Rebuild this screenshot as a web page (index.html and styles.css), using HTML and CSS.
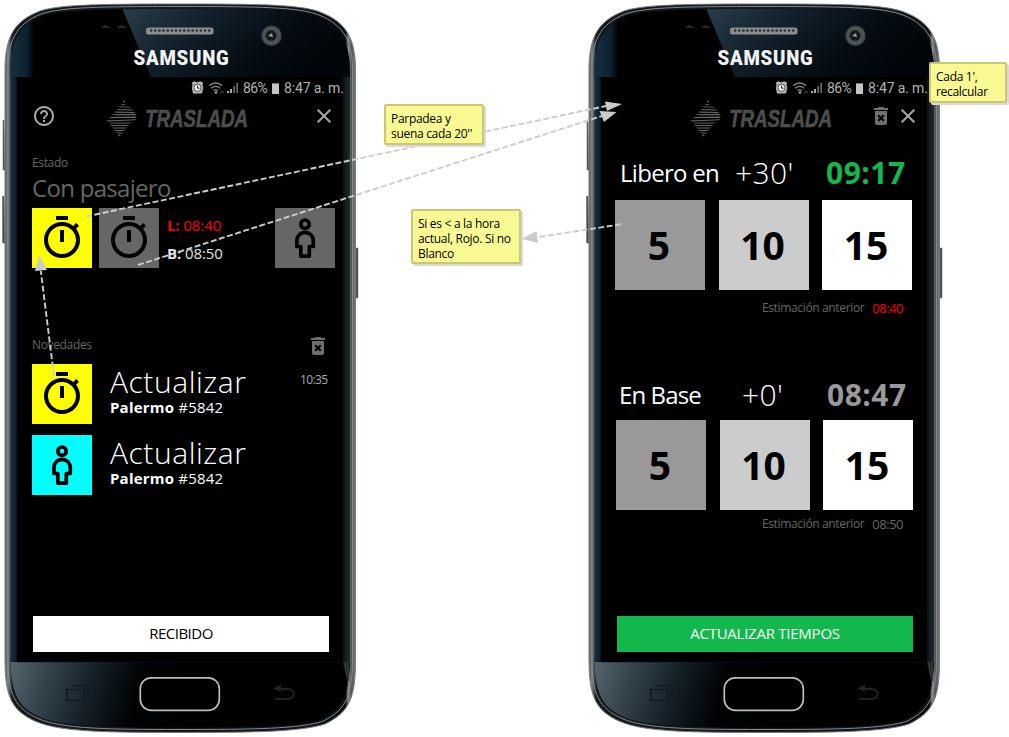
FILE: index.html
```html
<!DOCTYPE html>
<html lang="es">
<head>
<meta charset="utf-8">
<title>Traslada</title>
<link rel="stylesheet" href="styles.css">
</head>
<body>
<svg class="defs" width="0" height="0">
  <defs>
    <linearGradient id="side" x1="0" x2="1" y1="0" y2="0">
      <stop offset="0" stop-color="#55595b"/><stop offset=".008" stop-color="#7d8284"/><stop offset=".014" stop-color="#4d5355"/>
      <stop offset=".02" stop-color="#15191c"/><stop offset=".5" stop-color="#15191c"/>
      <stop offset=".972" stop-color="#0c1013"/><stop offset=".98" stop-color="#8b8f92"/><stop offset=".988" stop-color="#4c5154"/><stop offset="1" stop-color="#7a7d80"/>
    </linearGradient>
    <linearGradient id="face" x1="0" x2="1" y1="0" y2="0">
      <stop offset=".027" stop-color="#2a3942"/><stop offset=".034" stop-color="#122a38"/><stop offset=".044" stop-color="#0b1e2b"/><stop offset=".05" stop-color="#000"/>
      <stop offset=".93" stop-color="#000"/><stop offset=".95" stop-color="#141b1f"/><stop offset=".96" stop-color="#20282c"/>
    </linearGradient>
    <linearGradient id="glare" x1="0" x2="1" y1="0" y2=".35">
      <stop offset="0" stop-color="#2b3f4b"/><stop offset=".4" stop-color="#101f2a"/><stop offset=".75" stop-color="#050c12"/><stop offset="1" stop-color="#02060a"/>
    </linearGradient>
    <linearGradient id="edge" x1="0" x2="1" y1="0" y2="0">
      <stop offset="0" stop-color="#17303f"/><stop offset=".7" stop-color="#0b2230"/><stop offset="1" stop-color="#000"/>
    </linearGradient>
    <linearGradient id="chin" x1="0" x2="1" y1="0" y2=".06">
      <stop offset="0" stop-color="#55666e"/><stop offset=".12" stop-color="#34434b"/><stop offset=".25" stop-color="#15222a"/><stop offset=".4" stop-color="#010203"/><stop offset="1" stop-color="#000"/>
    </linearGradient>
    <radialGradient id="lens"><stop offset="0" stop-color="#9a9fa2"/><stop offset=".3" stop-color="#24282a"/><stop offset=".6" stop-color="#43474a"/><stop offset="1" stop-color="#565b5e"/></radialGradient>
    <pattern id="holes" x="149" y="28.500" width="4.150" height="4" patternUnits="userSpaceOnUse"><rect x="1" y="1" width="2.200" height="2.200" fill="#1b1f22"/></pattern>
    <clipPath id="inner"><path d="M10.500 72C10.500 42 18 27 42 16C62 9.500 105 9 180 9S298 9.500 318 17C341 26 350 43 350 72V655C350 692 343 708 322 719C302 727 250 727.500 180 727.500S62 727 40 717C17 707 10.500 692 10.500 655Z"/></clipPath>
  </defs>
  <symbol id="phone" viewBox="0 0 364 737">
    <path d="M4 120H3V170H5ZM4 196H2.500V243H5ZM356 248H358V298H356Z" fill="#444" stroke="#777" stroke-width=".6"/>
    <path d="M5 70C5 37 14 21 40 11C60 4.500 100 4 180 4S300 4.500 320 12C346 22 355.500 38 355.500 70V660C355.500 697 350 712 325 724C300 732 250 732.500 180 732.500S60 732 36 721.500C12 711 5 697 5 660Z" fill="url(#side)" stroke="#777b7d" stroke-width="1"/>
    <path d="M8 71C8 40 16 24 41 14C61 7 102 6.500 180 6.500S299 7 319 15C344 25 352.500 41 352.500 71V658C352.500 694 347 709 323.500 721C301 729 250 729.500 180 729.500S61 729 38 718.500C14.500 708 8 694 8 658Z" fill="none" stroke="#84898c" stroke-width="1"/>
    <g clip-path="url(#inner)">
      <rect width="364" height="737" fill="url(#face)"/>
      <rect x="10" y="10" width="24" height="67" fill="url(#edge)"/>
      <path d="M121 6L151 77H350V6Z" fill="url(#glare)"/>
      <rect x="10" y="662" width="341" height="70" fill="url(#chin)"/>
      <path d="M343 662L349 690V662Z" fill="#2b3235"/>
    </g>
    <path d="M17 661.800H343" stroke="#0a1d3c"/>
    <path d="M101 28Q105 22 110 28ZM117 28Q121 22 127 28Z" fill="#24282a"/>
    <rect x="146" y="27.500" width="67.500" height="7" rx="2.500" fill="#8c8f90"/>
    <rect x="149" y="28.500" width="62" height="4" fill="url(#holes)"/>
    <circle cx="271.500" cy="35.700" r="10.200" fill="#3f4447"/><circle cx="271.500" cy="35.700" r="8.500" fill="url(#lens)"/>
    <circle cx="271" cy="35.500" r="5.200" fill="#15191b"/><path d="M268 36L272 33L273 37Z" fill="#9da0a2"/>
    <text class="brand" x="133.500" y="65" textLength="96" lengthAdjust="spacingAndGlyphs">SAMSUNG</text>
    <rect x="140.300" y="677.800" width="79" height="32.500" rx="11" fill="#000" stroke="#bbb" stroke-width="1.700"/>
    <g fill="none" stroke="#101c23" stroke-width="1.700"><path d="M67 689.500H84V700.500H67ZM71 685.500H88V697"/></g>
    <path d="M276 689H287C296 689 296 699 287 699H275" fill="none" stroke="#1f2426" stroke-width="2"/><path d="M273 688.500L281 684.500V692Z" fill="#1f2426"/>
  </symbol>
  <symbol id="logo" viewBox="0 0 150 40">
    <g fill="#6a6a6a">
      <path d="M18 4.200L19 3.500L20 4.800L19 6ZM16 6.800L22 7.500L17 8ZM13.500 9.200L25 10V10.700L15 10.300ZM11.500 11.900L27.500 12.600V13.400L13 13ZM9.500 14.600L29.500 15V15.900L11 15.700ZM7 17.200L31.500 16.700L30.500 18.300L9 18.200ZM4 20L32 19.400L30 20.900L6 20.900ZM0.800 23.500L31.500 22.200L30 23.300L3 24.500ZM4 25.800L27 25.600L24 26.600L6 26.600ZM5.500 28.100L24.500 28.100L22 29L7 29ZM7 30.500L22.500 30.500L20 31.400L8.500 31.400ZM9.500 33L20.500 33L18.500 33.900L10.500 33.900ZM11.500 35.500H18L17 36.400H12.500ZM13 38L14.300 37.500L15.500 38.200L14.300 39.600Z"/>
    </g>
    <text class="wordmark" x="40" y="30" textLength="103" lengthAdjust="spacingAndGlyphs">TRASLADA</text>
  </symbol>
  <symbol id="status-icons" viewBox="0 0 48 14">
    <path d="M1 1.500L3.500 .3L6 1.500L9 .3L12 1.500L11.500 4L12.300 6.500L11 12.500H2L.8 6.500L1.500 4Z" fill="#b5b5b5"/><circle cx="6.500" cy="6.800" r="3.600" fill="#eee" stroke="#333" stroke-width=".8"/><path d="M6.500 4.800V7.200H8.500" fill="none" stroke="#222"/>
    <g fill="none" stroke="#888" stroke-width="1.400"><path d="M18 4.500Q25 -.5 31 4.500M20 7.200Q25 3.500 29 7.200M22.500 9.700Q25 8 27 9.700"/></g><circle cx="25" cy="11.500" r="1.200" fill="#aaa"/><path d="M29 11H33" stroke="#555"/>
    <path d="M36 10H38V12H36ZM39 8H41V12H39Z" fill="#aaa"/><path d="M42.300 5H44V12H42.300ZM45.300 2H47V12H45.300Z" fill="#666"/>
  </symbol>
  <symbol id="timer" viewBox="0 0 24 24"><path d="M15 1H9v2h6V1zm-4 13h2V8h-2v6zm8.030-6.610l1.420-1.420c-.43-.51-.9-.99-1.410-1.410l-1.420 1.420C16.070 4.740 14.120 4 12 4c-4.970 0-9 4.030-9 9s4.020 9 9 9 9-4.030 9-9c0-2.120-.74-4.070-1.970-5.610zM12 20c-3.870 0-7-3.130-7-7s3.130-7 7-7 7 3.130 7 7-3.130 7-7 7z"/></symbol>
  <symbol id="person" viewBox="0 0 60 60"><g fill="none" stroke="#000" stroke-width="3.700" stroke-linejoin="round"><circle cx="30" cy="16.200" r="4.200"/><path d="M25.800 48.200V38.500H21.900V32.500A8.150 8.150 0 0 1 38.300 32.500V38.500H34.300V48.200Z"/></g></symbol>
  <symbol id="trash" viewBox="0 0 24 24"><path d="M6 19c0 1.100.9 2 2 2h8c1.100 0 2-.9 2-2V7H6v12zm2.460-7.120l1.410-1.410L12 12.590l2.120-2.120 1.410 1.410L13.410 14l2.120 2.120-1.410 1.410L12 15.410l-2.120 2.120-1.410-1.410L10.590 14l-2.130-2.120zM15.500 4l-1-1h-5l-1 1H5v2h14V4z"/></symbol>
  <symbol id="close" viewBox="0 0 24 24"><path d="M19 6.410L17.590 5 12 10.590 6.410 5 5 6.410 10.590 12 5 17.590 6.410 19 12 13.410 17.590 19 19 17.590 13.410 12z"/></symbol>
  <symbol id="help" viewBox="0 0 24 24"><path d="M11 18h2v-2h-2v2zm1-16C6.480 2 2 6.480 2 12s4.480 10 10 10 10-4.480 10-10S17.520 2 12 2zm0 18c-4.410 0-8-3.590-8-8s3.590-8 8-8 8 3.590 8 8-3.590 8-8 8zm0-14c-2.210 0-4 1.790-4 4h2c0-1.100.9-2 2-2s2 .9 2 2c0 2-3 1.750-3 5h2c0-2.250 3-2.500 3-5 0-2.210-1.790-4-4-4z"/></symbol>
</svg>

<main class="board">
  <section class="phone">
    <svg class="frame"><use href="#phone"/></svg>
    <div class="screen">
      <div class="status"><svg class="status-icons"><use href="#status-icons"/></svg><span class="charge">86%</span><i class="battery"></i><span class="clock">8:47 a. m.</span></div>
      <header class="bar">
        <svg class="icon"><use href="#help"/></svg>
        <svg class="logo"><use href="#logo"/></svg>
        <svg class="icon"><use href="#close"/></svg>
      </header>
      <div class="label state-label">Estado</div>
      <h1 class="state">Con pasajero</h1>
      <div class="tiles">
        <div class="tile yellow"><svg class="timer"><use href="#timer"/></svg></div>
        <div class="tile gray"><svg class="timer"><use href="#timer"/></svg></div>
        <div class="times"><div class="late"><b>L:</b> 08:40</div><div><b>B:</b> 08:50</div></div>
        <div class="tile gray"><svg class="person"><use href="#person"/></svg></div>
      </div>
      <div class="news-head"><span class="label">Novedades</span><svg class="icon dim"><use href="#trash"/></svg></div>
      <div class="news">
        <article class="item">
          <div class="tile yellow"><svg class="timer"><use href="#timer"/></svg></div>
          <div class="item-text"><h2>Actualizar</h2><p><b>Palermo</b> #5842</p></div>
          <time>10:35</time>
        </article>
        <article class="item">
          <div class="tile cyan"><svg class="person"><use href="#person"/></svg></div>
          <div class="item-text"><h2>Actualizar</h2><p><b>Palermo</b> #5842</p></div>
        </article>
      </div>
      <button class="action">RECIBIDO</button>
    </div>
  </section>

  <section class="phone">
    <svg class="frame"><use href="#phone"/></svg>
    <div class="screen">
      <div class="status"><svg class="status-icons"><use href="#status-icons"/></svg><span class="charge">86%</span><i class="battery"></i><span class="clock">8:47 a. m.</span></div>
      <header class="bar">
        <span class="icon"></span>
        <svg class="logo"><use href="#logo"/></svg>
        <svg class="icon dim bar-trash"><use href="#trash"/></svg>
        <svg class="icon"><use href="#close"/></svg>
      </header>
      <section class="estimate">
        <div class="est-head"><span class="name">Libero en</span><span class="delta">+30'</span><strong class="eta green">09:17</strong></div>
        <div class="minutes"><button class="m5">5</button><button class="m10">10</button><button class="m15">15</button></div>
        <div class="previous">Estimación anterior <span class="prev-time late">08:40</span></div>
      </section>
      <section class="estimate base">
        <div class="est-head"><span class="name en-base">En Base</span><span class="delta zero">+0'</span><strong class="eta">08:47</strong></div>
        <div class="minutes"><button class="m5">5</button><button class="m10">10</button><button class="m15">15</button></div>
        <div class="previous">Estimación anterior <span class="prev-time">08:50</span></div>
      </section>
      <button class="action confirm">ACTUALIZAR TIEMPOS</button>
    </div>
  </section>

  <svg class="arrows" viewBox="0 0 1009 737">
    <g stroke="#ccc" stroke-width="1.900" stroke-dasharray="6 2.500">
      <path d="M86 216.500L606 106M138 265L602 116M54 376L40.800 271M621 224.300L537 237.300"/>
    </g>
    <path d="M622 104L605 101.500L607 111ZM616.500 112L599.500 111L604 122ZM39 255L35 271L47 270ZM521.500 239L536.500 231L538 243Z" fill="#ccc"/>
  </svg>
  <aside class="note blink">Parpadea y<br>suena cada 20''</aside>
  <aside class="note color">Si es &lt; a la hora<br>actual, Rojo. Si no<br>Blanco</aside>
  <aside class="note recalc">Cada 1',<br>recalcular</aside>
</main>
</body>
</html>
```
FILE: styles.css
```css
* { box-sizing: border-box; margin: 0; padding: 0; }
body { width: 1009px; height: 737px; overflow: hidden; background: #fff; font-family: "Open Sans", "Noto Sans", sans-serif; }
.defs { position: absolute; }
.board { position: relative; display: flex; gap: 220px; width: 1009px; height: 737px; }
.phone { position: relative; flex: none; width: 364px; height: 737px; padding: 77px 0 0 17px; }
.frame { position: absolute; inset: 0; width: 364px; height: 737px; }
.brand { font: 900 19.5px Roboto, sans-serif; letter-spacing: .8px; fill: #f2f2f2; }
.wordmark { font: italic bold 23px "Liberation Sans", sans-serif; fill: #4c4c4c; stroke: #5c5c5c; stroke-width: .4px; }
.screen { position: relative; display: flex; flex-direction: column; width: 326px; height: 585px; padding: 0 14px 10px 15px; background: #000; color: #fff; }

.status { display: flex; align-items: center; height: 22px; margin: 0 -14px 0 160px; font: 14px/22px Roboto, sans-serif; color: #b4b4b4; white-space: nowrap; }
.status-icons { flex: none; width: 48px; height: 14px; margin-left: -1px; }
.charge { flex: none; width: 24px; margin-left: 4px; letter-spacing: -.6px; }
.battery { flex: none; width: 7px; height: 11px; margin: 0 5px 0 5px; background: #c4c4c4; border-top: 1px solid #777; }
.clock { letter-spacing: -.15px; }
.bar { display: flex; align-items: center; height: 35px; padding-bottom: 2px; }
.icon { flex: none; width: 24px; height: 24px; fill: #a8a8a8; }
.dim { fill: #6f6f6f; }
.logo { width: 150px; height: 40px; margin: 2px 57px 0 49px; flex: none; }
.bar .bar-trash { margin-left: -27px; margin-right: 3px; }

.label { font-size: 12px; line-height: 16px; color: #666; letter-spacing: -.35px; }
.state-label { margin-top: 21px; }
.state { margin-top: 1px; font-size: 24px; line-height: 31px; font-weight: 400; color: #666; letter-spacing: -.7px; }
.tiles { display: flex; height: 60px; margin-top: 5px; }
.tile { flex: none; display: grid; place-items: center; width: 60px; height: 60px; }
.tiles .tile + .tile { margin-left: 7px; }
.timer { width: 48px; height: 48px; }
.person { width: 60px; height: 60px; }
.yellow { background: #ff0; }
.cyan { background: #0ff; }
.gray { background: #666; }
.times { flex: none; width: 116px; padding: 3px 0 0 8px; font-size: 15px; line-height: 28px; letter-spacing: -.1px; color: #e4e4e4; }
.late { color: #f00; }
.news-head { display: flex; align-items: center; justify-content: space-between; height: 24px; margin: 66px -1px 0 0; }
.news-head .label { margin-top: -2px; }
.news { display: grid; gap: 11px; margin-top: 6px; }
.item { display: flex; height: 60px; }
.item-text { flex: none; width: 208px; padding-left: 18px; }
h2 { padding-top: 1px; font-size: 30px; line-height: 33px; font-weight: 350; letter-spacing: .55px; }
p { font-size: 15px; line-height: 19px; letter-spacing: .2px; }
time { padding-top: 8px; font-size: 12px; line-height: 16px; letter-spacing: -.6px; color: #aaa; }
button { border: 0; font-family: inherit; color: #000; }
.action { width: 296px; height: 36px; margin: auto 0 0 1px; padding-bottom: 2px; background: #fff; font-size: 15px; letter-spacing: -.5px; }
.confirm { background: #12b84c; color: #fff; letter-spacing: -.25px; }

.estimate { margin: 22px 0 0 -1px; }
.base { margin: 62px 0 0 0; }
.est-head { display: grid; grid-template-columns: 121px 90px 1fr; height: 33px; line-height: 33px; white-space: nowrap; }
.name { padding-left: 5px; font-size: 24px; letter-spacing: -.7px; }
.en-base { padding-left: 3px; letter-spacing: -.9px; }
.delta { margin-left: -1px; font-size: 30px; font-weight: 350; letter-spacing: .4px; }
.zero { padding-left: 6px; }
.eta { font-size: 30px; letter-spacing: .5px; color: #999; }
.green { color: #12b84c; }
.minutes { display: grid; grid-template-columns: 90px 90px 90px; column-gap: 13.500px; margin-top: 11px; }
.base .minutes { margin-top: 9px; }
.minutes button { height: 90px; padding: 0 2px 1px 0; font-size: 39px; font-weight: 700; }
.m5 { background: #999; }
.m10 { background: #ccc; }
.m15 { background: #fff; }
.previous { display: flex; gap: 8px; justify-content: flex-end; margin: 10px 10px 0 0; font-size: 12px; line-height: 16px; color: #666; letter-spacing: -.35px; }
.base .previous { margin-top: 6px; }
.prev-time { font-size: 13px; letter-spacing: -.5px; }

.arrows { position: absolute; inset: 0; width: 1009px; height: 737px; }
.note { position: absolute; padding: 5px 0 0 5px; border: 2px solid #c8c874; border-radius: 2px; background: #f9f994; box-shadow: 2px 2px 0 #ddd8d8; font-size: 12px; line-height: 15px; letter-spacing: -.3px; color: #000; white-space: nowrap; }
.blink { left: 384px; top: 104px; width: 100px; height: 41px; }
.color { left: 411px; top: 209px; width: 110px; height: 55px; }
.recalc { left: 929px; top: 62px; width: 78px; height: 41px; }
```
